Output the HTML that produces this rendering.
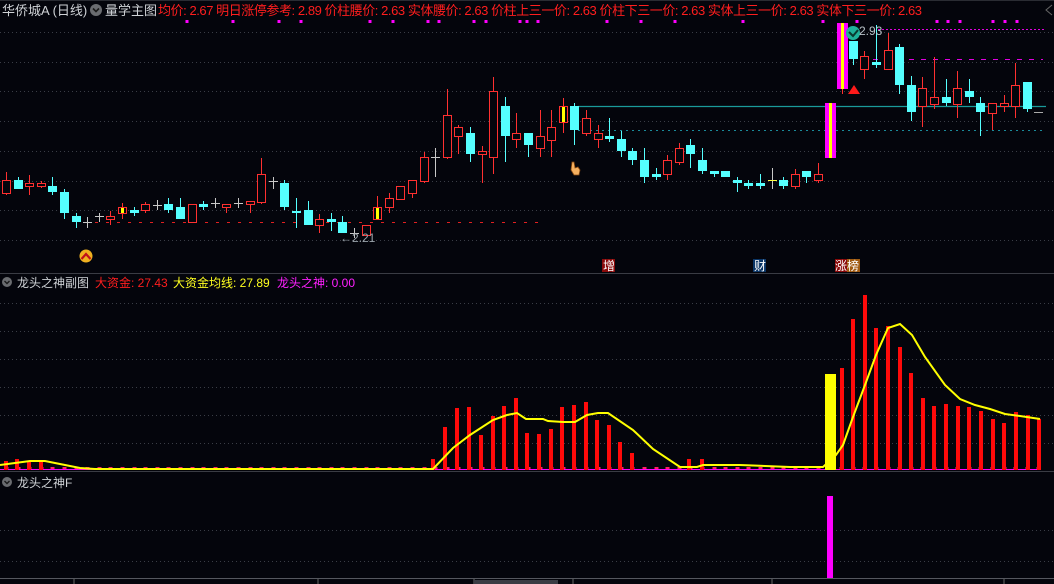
<!DOCTYPE html>
<html><head><meta charset="utf-8"><style>
html,body{margin:0;padding:0;background:#04050c;overflow:hidden}
svg{display:block}
text{font-family:"Liberation Sans","Noto Sans CJK SC",sans-serif}
</style></head><body>
<svg id="s" width="1054" height="584" viewBox="0 0 1054 584" xmlns="http://www.w3.org/2000/svg">
<rect width="1054" height="584" fill="#04050c"/>
<g id="grid" stroke="#3a3d46" stroke-width="1" stroke-dasharray="1,3"></g>
<line x1="0" y1="273.5" x2="1054" y2="273.5" stroke="#3a3c44"/>
<line x1="0" y1="471.5" x2="1054" y2="471.5" stroke="#3a3c44"/>
<line x1="0" y1="578.5" x2="1054" y2="578.5" stroke="#55575e"/>
<line x1="0" y1="0.5" x2="1054" y2="0.5" stroke="#2a2c33"/>
<text x="2" y="15" font-size="13" fill="#cfd2d6">华侨城A (日线)</text>
<circle cx="96" cy="10" r="6" fill="#6a6c70"/><path d="M93 8.5 L96 11.5 L99 8.5" stroke="#1a1a1a" stroke-width="1.6" fill="none"/>
<text x="105" y="15" font-size="13" fill="#cfd2d6">量学主图</text>
<text x="158" y="15" font-size="13" fill="#ff1e1e" textLength="764" lengthAdjust="spacing">均价: 2.67  明日涨停参考: 2.89  价柱腰价: 2.63  实体腰价: 2.63  价柱上三一价: 2.63  价柱下三一价: 2.63  实体上三一价: 2.63  实体下三一价: 2.63</text>
<path d="M1052 5 L1046 10 L1052 15" stroke="#666" fill="none"/>
<g id="sq" fill="#ff00ff"></g>
<line x1="95" y1="222.5" x2="545" y2="222.5" stroke="#e02020" stroke-dasharray="3,8"/>
<line x1="578" y1="106.5" x2="1046" y2="106.5" stroke="#1a9a9a" stroke-width="1.2"/>
<line x1="578" y1="130.5" x2="1046" y2="130.5" stroke="#1a8a9a" stroke-dasharray="2,4"/>
<line x1="878" y1="29.5" x2="1046" y2="29.5" stroke="#e000e0" stroke-dasharray="2,2"/>
<line x1="873" y1="59.5" x2="1043" y2="59.5" stroke="#e000e0" stroke-dasharray="5,7"/>
<g id="candles"></g>
<path d="M848 94 L854 85 L860 94 Z" fill="#ff1a1a"/>
<circle cx="853" cy="33" r="7" fill="#1fb29a"/><path d="M849 32 L853 36 L858 30" stroke="#0a3a30" stroke-width="2" fill="none"/>
<text x="859" y="35" font-size="12" fill="#b9c2c8">2.93</text>
<text x="340" y="242" font-size="12" fill="#9aa3aa">←2.21</text>
<circle cx="86" cy="256" r="6.5" fill="#f0b020"/><path d="M81.5 259 L86 254 L90.5 259" stroke="#c0101a" stroke-width="2.2" fill="none"/>
<path d="M572 162 L574 162 L575 168 L578 167 L580 170 L579 175 L574 175 L571 170 Z" fill="#f5b060" stroke="#8a4a10" stroke-width="0.8"/>
<rect x="602" y="259" width="13" height="13" fill="#8a0a0a"/><text x="603" y="270" font-size="12" fill="#fff">增</text>
<rect x="753" y="259" width="13" height="13" fill="#0a3566"/><text x="754" y="270" font-size="12" fill="#fff">财</text>
<rect x="835" y="259" width="12" height="13" fill="#8a0a0a"/><rect x="847" y="259" width="13" height="13" fill="#a05a10"/><text x="835" y="270" font-size="12" fill="#fff">涨榜</text>
<circle cx="7" cy="282" r="5" fill="#6a6c70"/><path d="M4.5 281 L7 283.5 L9.5 281" stroke="#1a1a1a" stroke-width="1.4" fill="none"/>
<text x="17" y="287" font-size="12" fill="#cfd2d6">龙头之神副图</text>
<text x="95" y="287" font-size="12" fill="#ff1e1e">大资金: 27.43</text>
<text x="173" y="287" font-size="12" fill="#ffff20">大资金均线: 27.89</text>
<text x="277" y="287" font-size="12" fill="#ff20ff">龙头之神: 0.00</text>
<g id="bars"></g>
<polyline fill="none" stroke="#ffff00" stroke-width="2" points="0,465 15,463 30,461 45,461 60,464 80,468 95,469 420,469 433,469 453,448 470,435 493,420 507,415 517,413 526,419 543,419 548,421 563,422 575,422 587,415 598,413 608,413 633,430 653,449 680,467 697,467 703,465 740,465 790,467 823,467 836,455 843,445 853,417 865,385 876,355 888,328 900,324 912,335 925,357 945,385 960,399 975,405 990,409 1005,414 1020,416 1040,419"/>
<circle cx="7" cy="482" r="5" fill="#6a6c70"/><path d="M4.5 481 L7 483.5 L9.5 481" stroke="#1a1a1a" stroke-width="1.4" fill="none"/>
<text x="17" y="487" font-size="12" fill="#cfd2d6">龙头之神F</text>
<rect x="827" y="496" width="6" height="82" fill="#ff00ff"/>
<g stroke="#666" stroke-width="1">
<line x1="74" y1="579" x2="74" y2="584"/><line x1="318" y1="579" x2="318" y2="584"/><line x1="474" y1="579" x2="474" y2="584"/><line x1="573" y1="579" x2="573" y2="584"/><line x1="772" y1="579" x2="772" y2="584"/><line x1="1004" y1="579" x2="1004" y2="584"/>
</g>
<rect x="474" y="580" width="84" height="4" fill="#3a3c44"/>
</svg>
<script>
var NS="http://www.w3.org/2000/svg";
function el(p,t,a){var e=document.createElementNS(NS,t);for(var k in a)e.setAttribute(k,a[k]);p.appendChild(e);return e;}
var g=document.getElementById("grid");
[32,62,91,121,151,181,210,240,303,331,359,387,415,443,530,561].forEach(function(y){el(g,"line",{x1:0,y1:y+.5,x2:1054,y2:y+.5});});
var sq=document.getElementById("sq");
[187,233,279,301,370,393,428,439,474,486,520,527,538,607,641,675,743,823,857,937,948,960,993,1005,1017].forEach(function(x){el(sq,"rect",{x:x-1.5,y:20,width:3,height:3});});
var X=function(i){return 6+11.6*i;};
var D=[
['r',180,193,172,195],['c',180,189,177,189],['r',183,186,175,195],['r',183,186,181,188],['c',186,192,177,195],
['c',192,213,189,219],['c',216,222,213,228],['x',222,222,217,228],['x',216,216,213,222],['r',216,219,211,225],
['y',207,213,203,219],['c',210,213,207,216],['r',204,210,202,213],['x',205,205,200,210],['c',204,210,198,213],
['c',207,219,198,219],['r',204,222,204,222],['c',204,207,201,210],['x',203,203,198,208],['r',204,207,204,213],
['x',203,203,198,208],['r',201,204,201,213],['r',174,202,158,204],['x',181,181,177,189],['c',183,207,180,210],
['c',211,213,198,228],['c',210,225,201,225],['r',219,225,214,233],['c',219,222,213,231],['c',222,233,216,233],
['x',233,233,228,238],['r',225,235,225,235],['y',207,219,196,219],['r',198,207,193,213],['r',186,199,186,200],
['r',180,193,180,198],['r',157,181,152,183],['x',157,157,148,177],['r',115,157,89,159],['r',127,136,125,154],
['c',133,154,127,162],['r',151,154,146,183],['r',91,157,77,174],['c',106,136,97,162],['r',133,139,113,148],
['c',133,145,133,157],['r',136,148,110,157],['r',127,140,110,157],['y',106,122,98,133],['c',106,130,103,145],
['r',118,133,110,136],['r',133,139,125,148],['c',136,139,118,142],['c',139,151,131,157],['c',151,160,148,165],
['c',160,177,148,183],['c',174,177,168,180],['r',160,174,155,180],['r',148,162,143,165],['c',145,154,139,168],
['c',160,171,148,174],['c',171,174,171,177],['c',171,177,171,177],['c',180,183,177,192],['c',183,186,180,189],
['c',183,186,174,189],['xy',180,180,168,189],['c',180,186,177,189],['r',174,186,169,189],['c',171,177,171,183],
['r',174,180,163,183],['m',103,158,103,158],['m',23,89,23,94],['c',41,59,41,65],['r',56,69,51,79],
['c',62,65,25,68],['r',50,69,33,70],['c',47,85,44,94],['c',85,112,76,121],['r',88,106,77,127],
['r',97,104,57,109],['c',97,103,79,106],['r',88,104,71,118],['c',91,97,79,103],['c',103,112,97,136],
['r',103,113,103,130],['r',103,106,95,112],['r',85,106,63,118],['c',82,109,82,112],['d',112,112,112,112]
];
var C=document.getElementById("candles");
D.forEach(function(d,i){var x=Math.round(X(i)),t=d[0],bt=d[1],bb=d[2],wt=d[3],wb=d[4];
 if(i==72)x=842;
 if(t=='m'){el(C,"line",{x1:x+.5,y1:wt,x2:x+.5,y2:wb,stroke:"#ff3030"});el(C,"rect",{x:x-5,y:bt,width:11,height:bb-bt,fill:"#ff00ff"});el(C,"rect",{x:x-1,y:bt,width:3,height:bb-bt,fill:"#ffff00"});return;}
 if(t=='d'){el(C,"line",{x1:x-4,y1:112.5,x2:x+5,y2:112.5,stroke:"#aaa"});return;}
 if(t=='x'||t=='xy'){el(C,"line",{x1:x+.5,y1:wt,x2:x+.5,y2:wb,stroke:"#c8c8c8"});el(C,"line",{x1:x-4,y1:bt+.5,x2:x+5,y2:bt+.5,stroke:t=='xy'?"#ffff40":"#c8c8c8"});return;}
 var col=t=='c'?"#55ffff":"#ff3030";
 el(C,"line",{x1:x+.5,y1:wt,x2:x+.5,y2:wb,stroke:col});
 if(t=='c'){el(C,"rect",{x:x-4,y:bt,width:9,height:Math.max(bb-bt,2),fill:col});}
 else{el(C,"rect",{x:x-3.5,y:bt+.5,width:8,height:Math.max(bb-bt,2),fill:"#04050c",stroke:col});
  if(t=='y')el(C,"rect",{x:x-1,y:bt+1,width:3,height:bb-bt-1,fill:"#ffff00"});}
});
var B=document.getElementById("bars");
var bars=[[6,461],[17,459],[29,461],[41,460],[433,459],[445,427],[457,408],[469,407],[481,435],[493,416],[504,406],[516,398],[527,433],[539,434],[551,429],[562,407],[574,405],[586,402],[597,420],[609,425],[620,442],[632,453],[689,459],[702,459],
[842,368],[853,319],[865,295],[876,328],[888,326],[900,347],[911,373],[923,398],[934,406],[946,404],[958,406],[969,407],[981,411],[993,419],[1004,423],[1016,412],[1028,415],[1039,419]];
for(var i=0;i<90;i++){var x=Math.round(X(i));el(B,"rect",{x:x-1.5,y:467,width:4,height:3,fill:"#ff2060"});}
el(B,"line",{x1:0,y1:469.5,x2:1040,y2:469.5,stroke:"#ff00ff"});
bars.forEach(function(b){el(B,"rect",{x:b[0]-2,y:b[1],width:4,height:470-b[1],fill:"#ff0a0a"});});
el(B,"rect",{x:825,y:374,width:11,height:96,fill:"#ffff00"});
</script>
</body></html>
